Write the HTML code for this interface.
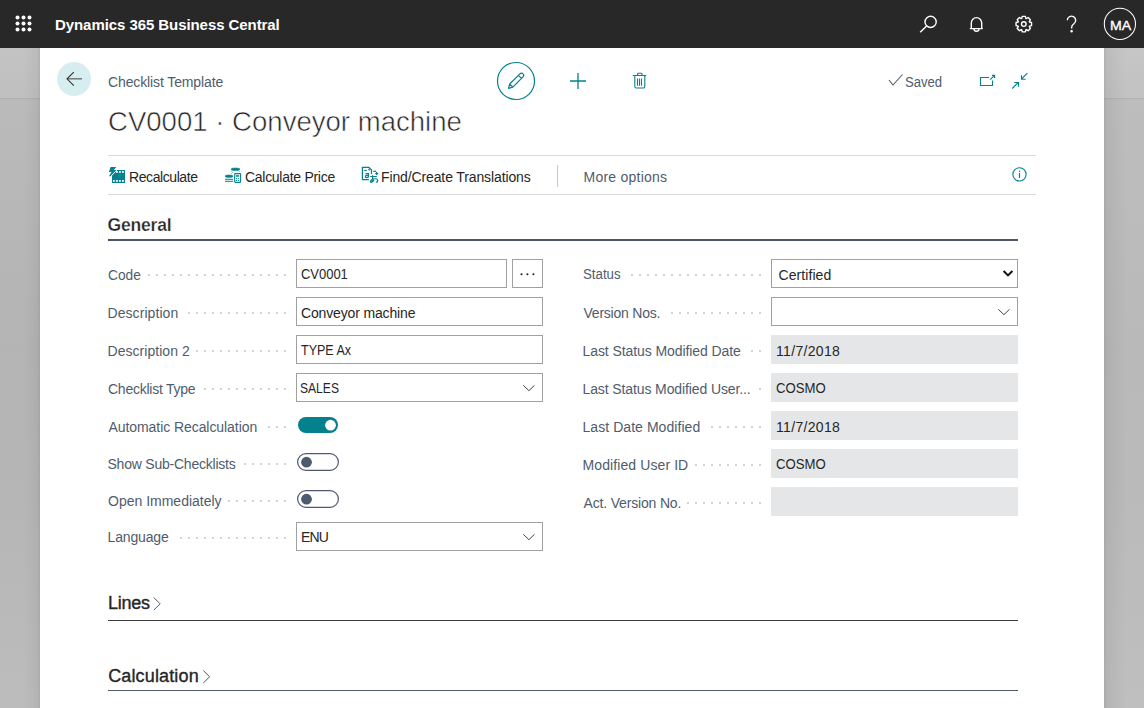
<!DOCTYPE html>
<html><head><meta charset="utf-8">
<style>
*{box-sizing:border-box;margin:0;padding:0}
html,body{width:1144px;height:708px;overflow:hidden}
body{font-family:"Liberation Sans",sans-serif;background:#b5b5b5;position:relative;color:#333}
.abs{position:absolute}
.t{position:absolute;white-space:nowrap;line-height:1}
.box{position:absolute;height:29px;border:1px solid #a0a0a0;background:#fff}
.ro{position:absolute;height:29px;background:#e5e6e8}
</style></head>
<body>
<div class="abs" style="left:0;top:0;width:1144px;height:48px;background:#282828"></div>
<div class="abs" style="left:0;top:48px;width:40px;height:660px;background:linear-gradient(to right,rgba(0,0,0,0) 0,rgba(0,0,0,0) 60%,rgba(0,0,0,.04) 92%,rgba(0,0,0,.09) 100%),linear-gradient(to bottom,#c3c3c3 0,#bfbfbf 50px,#bababa 51px,#b4b4b4 300px,#b6b6b6 450px,#bcbcbc 660px)"></div>
<div class="abs" style="left:0;top:98px;width:40px;height:1px;background:rgba(0,0,0,.07)"></div>
<div class="abs" style="left:1104px;top:48px;width:40px;height:660px;background:linear-gradient(to left,rgba(0,0,0,0) 0,rgba(0,0,0,0) 45%,rgba(0,0,0,.05) 92%,rgba(0,0,0,.1) 100%),linear-gradient(to bottom,#c6c6c6 0,#c2c2c2 50px,#bdbdbd 51px,#b9b9b9 300px,#bababa 450px,#bfbfbf 660px)"></div>
<div class="abs" style="left:1104px;top:98px;width:40px;height:1px;background:rgba(0,0,0,.07)"></div>
<div class="abs" style="left:40px;top:48px;width:1064px;height:660px;background:#fff"></div>

<svg class="abs" style="left:0;top:0" width="1144" height="708">
  <!-- top bar -->
  <g fill="#fff">
    <circle cx="17.5" cy="17.5" r="2"/><circle cx="23.5" cy="17.5" r="2"/><circle cx="29.5" cy="17.5" r="2"/>
    <circle cx="17.5" cy="23.5" r="2"/><circle cx="23.5" cy="23.5" r="2"/><circle cx="29.5" cy="23.5" r="2"/>
    <circle cx="17.5" cy="29.5" r="2"/><circle cx="23.5" cy="29.5" r="2"/><circle cx="29.5" cy="29.5" r="2"/>
  </g>
  <g transform="translate(900,0)" fill="none" stroke="#fff" stroke-width="1.4">
    <circle cx="30.6" cy="21.9" r="5.6"/><line x1="26.6" y1="25.9" x2="20.2" y2="32.3"/>
    <path d="M69.8,28.6 h13 M71.3,28.6 v-5.6 a5.2,5.4 0 0 1 10.4,0 v5.6 M74,29 a2.5,2.3 0 0 0 5,0"/>
    <circle cx="123.8" cy="24.1" r="2.3"/>
    <path d="M129.42,21.99 L131.54,22.53 L131.54,25.67 L129.42,26.21 L129.27,26.58 L130.38,28.46 L128.16,30.68 L126.28,29.57 L125.91,29.72 L125.37,31.84 L122.23,31.84 L121.69,29.72 L121.32,29.57 L119.44,30.68 L117.22,28.46 L118.33,26.58 L118.18,26.21 L116.06,25.67 L116.06,22.53 L118.18,21.99 L118.33,21.62 L117.22,19.74 L119.44,17.52 L121.32,18.63 L121.69,18.48 L122.23,16.36 L125.37,16.36 L125.91,18.48 L126.28,18.63 L128.16,17.52 L130.38,19.74 L129.27,21.62 Z" stroke-linejoin="round"/>
    <path d="M167.3,20.3 a4.2,4.2 0 1 1 6.6,3.5 c-1.5,1 -2.3,1.9 -2.3,3.6 v1.2"/><circle cx="171.6" cy="31.2" r="0.6" fill="#fff"/>
    <circle cx="219.9" cy="23.9" r="15.6" stroke-width="1.05"/>
  </g>
  <!-- header -->
  <g transform="translate(0,48)">
  <circle cx="74" cy="31" r="17" fill="#d7eef1"/>
  <path d="M67.5,30.8 h14.5" fill="none" stroke="#6a7070" stroke-width="1.4"/><path d="M73.8,24.1 l-6.8,6.7 l6.8,6.8" fill="none" stroke="#2a2a2a" stroke-width="1.05"/>
  <circle cx="516" cy="33" r="18.5" fill="none" stroke="#03818c" stroke-width="1.2"/>
  <path d="M508.5,40.3 l1.2,-4.3 l10.2,-10.2 a1.55,1.55 0 0 1 3.1,3.1 l-10.2,10.2 z M518.4,27.3 l3.1,3.1 M509.7,36 l3.1,3.1" fill="none" stroke="#03818c" stroke-width="1.2" stroke-linejoin="round"/>
  <path d="M570,33 h16 M578,25 v16" stroke="#03818c" stroke-width="1.3"/>
  <path d="M632.8,27.5 h13.4 M637.6,27.3 v-1.4 a0.7,0.7 0 0 1 0.7,-0.7 h3 a0.7,0.7 0 0 1 0.7,0.7 v1.4 M634.8,27.8 v10.8 a1.4,1.4 0 0 0 1.4,1.4 h7.2 a1.4,1.4 0 0 0 1.4,-1.4 v-10.8 M637.5,30.5 v7.3 M639.5,30.5 v7.3 M641.5,30.5 v7.3" fill="none" stroke="#03818c" stroke-width="1.1"/>
  <path d="M889,32 l4,5 l9.5,-10.5" fill="none" stroke="#505c6d" stroke-width="1.1"/>
  <path d="M989,29.5 h-8.5 v8 h12 v-5" fill="none" stroke="#03818c" stroke-width="1.15"/>
  <path d="M990.2,31.6 l4.4,-4.3 M992,27.4 h2.6 v2.6" fill="none" stroke="#03818c" stroke-width="1.15"/>
  <path d="M1027.4,25.2 l-6,6 M1021.5,27.2 v4 h4.2 M1012.2,40.5 l6.2,-6.1 M1014.2,34.5 h4.3 v4.2" fill="none" stroke="#03818c" stroke-width="1.15"/>
  </g>
  <!-- toolbar lines -->
  <rect x="108" y="155" width="928" height="1" fill="#d9d9d9"/>
  <rect x="108" y="194" width="928" height="1" fill="#d9d9d9"/>
  <rect x="557" y="165" width="1" height="22" fill="#c8c8c8"/>
  <circle cx="1019.5" cy="174.4" r="6.6" fill="none" stroke="#03818c" stroke-width="1.1"/>
  <path d="M1019.5,173 v5" stroke="#03818c" stroke-width="1.2"/><circle cx="1019.5" cy="171.3" r="0.75" fill="#03818c"/>
  <!-- toolbar icons -->
  <g transform="translate(100,160)">
  <g fill="#03818c">
    <rect x="12" y="10" width="13" height="13"/>
    <path d="M10.6,7 L16.2,7 L13.9,10 L16.4,10 L10.4,16.2 L8.9,16.2 L11.6,12 L8.9,12 Z" stroke="#fff" stroke-width="1.4" paint-order="stroke" stroke-linejoin="round"/>
  </g>
  <g fill="#fff">
    <rect x="16" y="11" width="1.8" height="1.8"/><rect x="19" y="11" width="1.8" height="1.8"/><rect x="22" y="11" width="1.8" height="1.8"/>
    <rect x="13" y="20" width="1.8" height="1.8"/><rect x="16" y="20" width="1.8" height="1.8"/><rect x="19" y="20" width="1.8" height="1.8"/><rect x="22" y="20" width="1.8" height="1.8"/>
  </g>
  <g fill="#03818c" stroke="#03818c">
    <ellipse cx="135.5" cy="9.3" rx="4.5" ry="1.3" stroke-width="0.6"/>
    <ellipse cx="129" cy="16.2" rx="4" ry="1.2" stroke-width="0.6"/>
    <path d="M125,19.3 h8 M125,21.3 h8" stroke-width="1"/>
    <path d="M131.3,11.5 l1,1 M139.5,11.5 v0.5 M131.5,13.5 l1,-0.8" stroke-width="0.8"/>
  </g>
  <rect x="134.7" y="13.6" width="5.9" height="8.8" rx="0.6" fill="none" stroke="#03818c" stroke-width="1.1"/>
  <g fill="#03818c">
    <rect x="136" y="15.2" width="3.2" height="1.5"/>
    <circle cx="136.5" cy="18.5" r="0.6"/><circle cx="138.6" cy="18.5" r="0.6"/>
    <circle cx="136.5" cy="20.4" r="0.6"/><circle cx="138.6" cy="20.4" r="0.6"/>
  </g>
  <g fill="none" stroke="#03818c" stroke-width="1.25">
    <path d="M268.9,19.6 h-6.5 v-12.3 h6.5 l2.6,2.6 v4"/>
    <circle cx="269.3" cy="9.5" r="0.7" stroke-width="1"/>
    <path d="M264.2,10.5 h2.5"/>
    <path d="M265.5,13.6 h3 v4 M268.5,15.8 c-1,-0.6 -3,-0.5 -3.1,0.7 c-0.1,1.3 2,1.5 3.1,0.2"/>
    <path d="M273.3,11.4 h2.8"/>
    <path d="M275.2,13.5 h2.9 M276.6,12.1 v2.8"/>
    <path d="M270.2,16.5 h6.6 M272.6,15.2 v3.6 l-0.8,3.2 M275.9,22.4 c2.2,-0.2 2.7,-3.4 -0.2,-3.6 c-2.8,-0.2 -5.3,1.3 -5.3,2.7 c0,1.3 1.9,1.4 3.6,-1.6" stroke-width="1.15"/>
  </g>
  </g>
  <!-- General underline -->
  <rect x="108" y="239" width="910" height="2" fill="#4b5567"/>
  <!-- Lines / Calculation -->
  <rect x="108" y="620" width="910" height="1" fill="#3c3c3c"/>
  <rect x="108" y="690" width="910" height="1" fill="#505c6d"/>
  <path d="M153.8,597.5 l6.3,6.3 l-6.3,6.3" fill="none" stroke="#555" stroke-width="1"/>
  <path d="M203.3,670.5 l6.3,6.3 l-6.3,6.3" fill="none" stroke="#555" stroke-width="1"/>
</svg>

<div class="box" style="left:296px;top:259px;width:211px"></div>
<div class="box" style="left:512px;top:259px;width:31px"></div>
<div class="box" style="left:296px;top:297px;width:247px"></div>
<div class="box" style="left:296px;top:335px;width:247px"></div>
<div class="box" style="left:296px;top:373px;width:247px"></div>
<div class="box" style="left:296px;top:522px;width:247px"></div>
<div class="box" style="left:771px;top:259px;width:247px"></div>
<div class="box" style="left:771px;top:297px;width:247px"></div>
<div class="ro" style="left:771px;top:335px;width:247px"></div>
<div class="ro" style="left:771px;top:373px;width:247px"></div>
<div class="ro" style="left:771px;top:411px;width:247px"></div>
<div class="ro" style="left:771px;top:449px;width:247px"></div>
<div class="ro" style="left:771px;top:487px;width:247px"></div>

<svg class="abs" style="left:0;top:0" width="1144" height="708">
  <g fill="#cfd2d7"><rect x="284" y="274" width="2" height="2"/><rect x="276" y="274" width="2" height="2"/><rect x="268" y="274" width="2" height="2"/><rect x="260" y="274" width="2" height="2"/><rect x="252" y="274" width="2" height="2"/><rect x="244" y="274" width="2" height="2"/><rect x="236" y="274" width="2" height="2"/><rect x="228" y="274" width="2" height="2"/><rect x="220" y="274" width="2" height="2"/><rect x="212" y="274" width="2" height="2"/><rect x="204" y="274" width="2" height="2"/><rect x="196" y="274" width="2" height="2"/><rect x="188" y="274" width="2" height="2"/><rect x="180" y="274" width="2" height="2"/><rect x="172" y="274" width="2" height="2"/><rect x="164" y="274" width="2" height="2"/><rect x="156" y="274" width="2" height="2"/><rect x="148" y="274" width="2" height="2"/><rect x="284" y="312" width="2" height="2"/><rect x="276" y="312" width="2" height="2"/><rect x="268" y="312" width="2" height="2"/><rect x="260" y="312" width="2" height="2"/><rect x="252" y="312" width="2" height="2"/><rect x="244" y="312" width="2" height="2"/><rect x="236" y="312" width="2" height="2"/><rect x="228" y="312" width="2" height="2"/><rect x="220" y="312" width="2" height="2"/><rect x="212" y="312" width="2" height="2"/><rect x="204" y="312" width="2" height="2"/><rect x="196" y="312" width="2" height="2"/><rect x="188" y="312" width="2" height="2"/><rect x="284" y="350" width="2" height="2"/><rect x="276" y="350" width="2" height="2"/><rect x="268" y="350" width="2" height="2"/><rect x="260" y="350" width="2" height="2"/><rect x="252" y="350" width="2" height="2"/><rect x="244" y="350" width="2" height="2"/><rect x="236" y="350" width="2" height="2"/><rect x="228" y="350" width="2" height="2"/><rect x="220" y="350" width="2" height="2"/><rect x="212" y="350" width="2" height="2"/><rect x="204" y="350" width="2" height="2"/><rect x="196" y="350" width="2" height="2"/><rect x="284" y="388" width="2" height="2"/><rect x="276" y="388" width="2" height="2"/><rect x="268" y="388" width="2" height="2"/><rect x="260" y="388" width="2" height="2"/><rect x="252" y="388" width="2" height="2"/><rect x="244" y="388" width="2" height="2"/><rect x="236" y="388" width="2" height="2"/><rect x="228" y="388" width="2" height="2"/><rect x="220" y="388" width="2" height="2"/><rect x="212" y="388" width="2" height="2"/><rect x="204" y="388" width="2" height="2"/><rect x="284" y="426" width="2" height="2"/><rect x="276" y="426" width="2" height="2"/><rect x="268" y="426" width="2" height="2"/><rect x="284" y="463" width="2" height="2"/><rect x="276" y="463" width="2" height="2"/><rect x="268" y="463" width="2" height="2"/><rect x="260" y="463" width="2" height="2"/><rect x="252" y="463" width="2" height="2"/><rect x="244" y="463" width="2" height="2"/><rect x="284" y="500" width="2" height="2"/><rect x="276" y="500" width="2" height="2"/><rect x="268" y="500" width="2" height="2"/><rect x="260" y="500" width="2" height="2"/><rect x="252" y="500" width="2" height="2"/><rect x="244" y="500" width="2" height="2"/><rect x="236" y="500" width="2" height="2"/><rect x="228" y="500" width="2" height="2"/><rect x="284" y="537" width="2" height="2"/><rect x="276" y="537" width="2" height="2"/><rect x="268" y="537" width="2" height="2"/><rect x="260" y="537" width="2" height="2"/><rect x="252" y="537" width="2" height="2"/><rect x="244" y="537" width="2" height="2"/><rect x="236" y="537" width="2" height="2"/><rect x="228" y="537" width="2" height="2"/><rect x="220" y="537" width="2" height="2"/><rect x="212" y="537" width="2" height="2"/><rect x="204" y="537" width="2" height="2"/><rect x="196" y="537" width="2" height="2"/><rect x="188" y="537" width="2" height="2"/><rect x="180" y="537" width="2" height="2"/><rect x="759" y="274" width="2" height="2"/><rect x="751" y="274" width="2" height="2"/><rect x="743" y="274" width="2" height="2"/><rect x="735" y="274" width="2" height="2"/><rect x="727" y="274" width="2" height="2"/><rect x="719" y="274" width="2" height="2"/><rect x="711" y="274" width="2" height="2"/><rect x="703" y="274" width="2" height="2"/><rect x="695" y="274" width="2" height="2"/><rect x="687" y="274" width="2" height="2"/><rect x="679" y="274" width="2" height="2"/><rect x="671" y="274" width="2" height="2"/><rect x="663" y="274" width="2" height="2"/><rect x="655" y="274" width="2" height="2"/><rect x="647" y="274" width="2" height="2"/><rect x="639" y="274" width="2" height="2"/><rect x="631" y="274" width="2" height="2"/><rect x="759" y="312" width="2" height="2"/><rect x="751" y="312" width="2" height="2"/><rect x="743" y="312" width="2" height="2"/><rect x="735" y="312" width="2" height="2"/><rect x="727" y="312" width="2" height="2"/><rect x="719" y="312" width="2" height="2"/><rect x="711" y="312" width="2" height="2"/><rect x="703" y="312" width="2" height="2"/><rect x="695" y="312" width="2" height="2"/><rect x="687" y="312" width="2" height="2"/><rect x="679" y="312" width="2" height="2"/><rect x="671" y="312" width="2" height="2"/><rect x="759" y="350" width="2" height="2"/><rect x="751" y="350" width="2" height="2"/><rect x="759" y="388" width="2" height="2"/><rect x="759" y="426" width="2" height="2"/><rect x="751" y="426" width="2" height="2"/><rect x="743" y="426" width="2" height="2"/><rect x="735" y="426" width="2" height="2"/><rect x="727" y="426" width="2" height="2"/><rect x="719" y="426" width="2" height="2"/><rect x="711" y="426" width="2" height="2"/><rect x="759" y="464" width="2" height="2"/><rect x="751" y="464" width="2" height="2"/><rect x="743" y="464" width="2" height="2"/><rect x="735" y="464" width="2" height="2"/><rect x="727" y="464" width="2" height="2"/><rect x="719" y="464" width="2" height="2"/><rect x="711" y="464" width="2" height="2"/><rect x="703" y="464" width="2" height="2"/><rect x="695" y="464" width="2" height="2"/><rect x="759" y="502" width="2" height="2"/><rect x="751" y="502" width="2" height="2"/><rect x="743" y="502" width="2" height="2"/><rect x="735" y="502" width="2" height="2"/><rect x="727" y="502" width="2" height="2"/><rect x="719" y="502" width="2" height="2"/><rect x="711" y="502" width="2" height="2"/><rect x="703" y="502" width="2" height="2"/><rect x="695" y="502" width="2" height="2"/><rect x="687" y="502" width="2" height="2"/></g>
  <g fill="#222"><circle cx="521.5" cy="274.3" r="1.05"/><circle cx="527.4" cy="274.3" r="1.05"/><circle cx="533.4" cy="274.3" r="1.05"/></g>
  <rect x="298" y="417" width="40" height="16" rx="8" fill="#03818c"/>
  <circle cx="330.5" cy="425.2" r="5.4" fill="#fff"/>
  <rect x="297.6" y="453.6" width="40.8" height="16.8" rx="8.4" fill="none" stroke="#4e5a6e" stroke-width="1.2"/>
  <circle cx="306.5" cy="462.2" r="5.4" fill="#4e5a6e"/>
  <rect x="297.6" y="490.6" width="40.8" height="16.8" rx="8.4" fill="none" stroke="#4e5a6e" stroke-width="1.2"/>
  <circle cx="306.5" cy="499.2" r="5.4" fill="#4e5a6e"/>
  <path d="M523.3,385.3 l5.6,5.4 l5.6,-5.4" fill="none" stroke="#444" stroke-width="1"/>
  <path d="M523.3,534.3 l5.6,5.4 l5.6,-5.4" fill="none" stroke="#444" stroke-width="1"/>
  <path d="M998.3,309.3 l5.6,5.4 l5.6,-5.4" fill="none" stroke="#444" stroke-width="1"/>
  <path d="M1003.6,271 l4.4,4.4 l4.4,-4.4" fill="none" stroke="#111" stroke-width="2"/>
</svg>
<div class="t" id="t_app" style="left:55.00px;top:16.60px;font-size:15px;font-weight:bold;color:#fff;letter-spacing:-0.071px">Dynamics 365 Business Central</div>
<div class="t" id="t_ma" style="left:1109.50px;top:19.92px;font-size:12.5px;font-weight:normal;color:#fff;letter-spacing:0.000px;transform:scaleX(1.1286);transform-origin:0 0;-webkit-text-stroke:0.35px #fff">MA</div>
<div class="t" id="t_crumb" style="left:108.00px;top:74.76px;font-size:14px;font-weight:normal;color:#505c6d;letter-spacing:-0.118px">Checklist Template</div>
<div class="t" id="t_title" style="left:107.50px;top:107.44px;font-size:28.5px;font-weight:normal;color:#262626;letter-spacing:0.000px;transform:scaleX(0.9670);transform-origin:0 0;-webkit-text-stroke:0.6px #fff">CV0001 · Conveyor machine</div>
<div class="t" id="t_saved" style="left:904.50px;top:74.76px;font-size:14px;font-weight:normal;color:#505c6d;letter-spacing:0.000px;transform:scaleX(0.9359);transform-origin:0 0">Saved</div>
<div class="t" id="t_recalc" style="left:129.00px;top:169.76px;font-size:14px;font-weight:normal;color:#262626;letter-spacing:-0.420px">Recalculate</div>
<div class="t" id="t_calcp" style="left:245.00px;top:169.76px;font-size:14px;font-weight:normal;color:#262626;letter-spacing:-0.285px">Calculate Price</div>
<div class="t" id="t_find" style="left:381.00px;top:169.76px;font-size:14px;font-weight:normal;color:#262626;letter-spacing:-0.122px">Find/Create Translations</div>
<div class="t" id="t_more" style="left:583.50px;top:169.76px;font-size:14px;font-weight:normal;color:#505c6d;letter-spacing:0.243px">More options</div>
<div class="t" id="t_general" style="left:107.50px;top:217.20px;font-size:17.5px;font-weight:bold;color:#262626;letter-spacing:-0.167px;-webkit-text-stroke:0.25px #fff">General</div>
<div class="t" id="l_code" style="left:107.50px;top:267.76px;font-size:14px;font-weight:normal;color:#505c6d;letter-spacing:0.000px;transform:scaleX(0.9800);transform-origin:0 0">Code</div>
<div class="t" id="l_desc" style="left:107.50px;top:305.76px;font-size:14px;font-weight:normal;color:#505c6d;letter-spacing:0.070px">Description</div>
<div class="t" id="l_desc2" style="left:107.50px;top:343.76px;font-size:14px;font-weight:normal;color:#505c6d;letter-spacing:0.044px">Description 2</div>
<div class="t" id="l_type" style="left:108.00px;top:381.76px;font-size:14px;font-weight:normal;color:#505c6d;letter-spacing:-0.248px">Checklist Type</div>
<div class="t" id="l_auto" style="left:108.50px;top:419.76px;font-size:14px;font-weight:normal;color:#505c6d;letter-spacing:-0.068px">Automatic Recalculation</div>
<div class="t" id="l_sub" style="left:107.50px;top:456.76px;font-size:14px;font-weight:normal;color:#505c6d;letter-spacing:-0.222px">Show Sub-Checklists</div>
<div class="t" id="l_open" style="left:108.00px;top:493.76px;font-size:14px;font-weight:normal;color:#505c6d;letter-spacing:0.000px">Open Immediately</div>
<div class="t" id="l_lang" style="left:107.50px;top:529.76px;font-size:14px;font-weight:normal;color:#505c6d;letter-spacing:-0.145px">Language</div>
<div class="t" id="l_status" style="left:582.50px;top:266.76px;font-size:14px;font-weight:normal;color:#505c6d;letter-spacing:0.000px;transform:scaleX(0.9462);transform-origin:0 0">Status</div>
<div class="t" id="l_ver" style="left:583.50px;top:305.76px;font-size:14px;font-weight:normal;color:#505c6d;letter-spacing:-0.230px">Version Nos.</div>
<div class="t" id="l_lsmd" style="left:582.50px;top:343.76px;font-size:14px;font-weight:normal;color:#505c6d;letter-spacing:-0.084px">Last Status Modified Date</div>
<div class="t" id="l_lsmu" style="left:582.50px;top:381.76px;font-size:14px;font-weight:normal;color:#505c6d;letter-spacing:-0.111px">Last Status Modified User...</div>
<div class="t" id="l_ldm" style="left:582.50px;top:419.76px;font-size:14px;font-weight:normal;color:#505c6d;letter-spacing:0.059px">Last Date Modified</div>
<div class="t" id="l_muid" style="left:582.50px;top:457.76px;font-size:14px;font-weight:normal;color:#505c6d;letter-spacing:0.098px">Modified User ID</div>
<div class="t" id="l_avn" style="left:583.50px;top:495.76px;font-size:14px;font-weight:normal;color:#505c6d;letter-spacing:-0.169px">Act. Version No.</div>
<div class="t" id="v_code" style="left:300.50px;top:266.76px;font-size:14px;font-weight:normal;color:#262626;letter-spacing:0.000px;transform:scaleX(0.9254);transform-origin:0 0">CV0001</div>
<div class="t" id="v_desc" style="left:301.00px;top:305.76px;font-size:14px;font-weight:normal;color:#262626;letter-spacing:-0.152px">Conveyor machine</div>
<div class="t" id="v_desc2" style="left:301.00px;top:342.76px;font-size:14px;font-weight:normal;color:#262626;letter-spacing:0.000px;transform:scaleX(0.8929);transform-origin:0 0">TYPE Ax</div>
<div class="t" id="v_type" style="left:300.00px;top:380.76px;font-size:14px;font-weight:normal;color:#262626;letter-spacing:0.000px;transform:scaleX(0.8626);transform-origin:0 0">SALES</div>
<div class="t" id="v_lang" style="left:301.00px;top:529.76px;font-size:14px;font-weight:normal;color:#262626;letter-spacing:-0.800px">ENU</div>
<div class="t" id="v_status" style="left:778.50px;top:267.76px;font-size:14px;font-weight:normal;color:#262626;letter-spacing:0.073px">Certified</div>
<div class="t" id="v_lsmd" style="left:776.00px;top:343.76px;font-size:14px;font-weight:normal;color:#262626;letter-spacing:0.323px">11/7/2018</div>
<div class="t" id="v_lsmu" style="left:776.00px;top:380.76px;font-size:14px;font-weight:normal;color:#262626;letter-spacing:0.000px;transform:scaleX(0.9380);transform-origin:0 0">COSMO</div>
<div class="t" id="v_ldm" style="left:776.00px;top:419.76px;font-size:14px;font-weight:normal;color:#262626;letter-spacing:0.323px">11/7/2018</div>
<div class="t" id="v_muid" style="left:776.00px;top:456.76px;font-size:14px;font-weight:normal;color:#262626;letter-spacing:0.000px;transform:scaleX(0.9380);transform-origin:0 0">COSMO</div>
<div class="t" id="t_lines" style="left:108.00px;top:594.12px;font-size:18px;font-weight:normal;color:#262626;letter-spacing:-0.266px;-webkit-text-stroke:0.35px #262626">Lines</div>
<div class="t" id="t_calc" style="left:108.20px;top:667.12px;font-size:18px;font-weight:normal;color:#262626;letter-spacing:0.140px;-webkit-text-stroke:0.35px #262626">Calculation</div>
</body></html>
